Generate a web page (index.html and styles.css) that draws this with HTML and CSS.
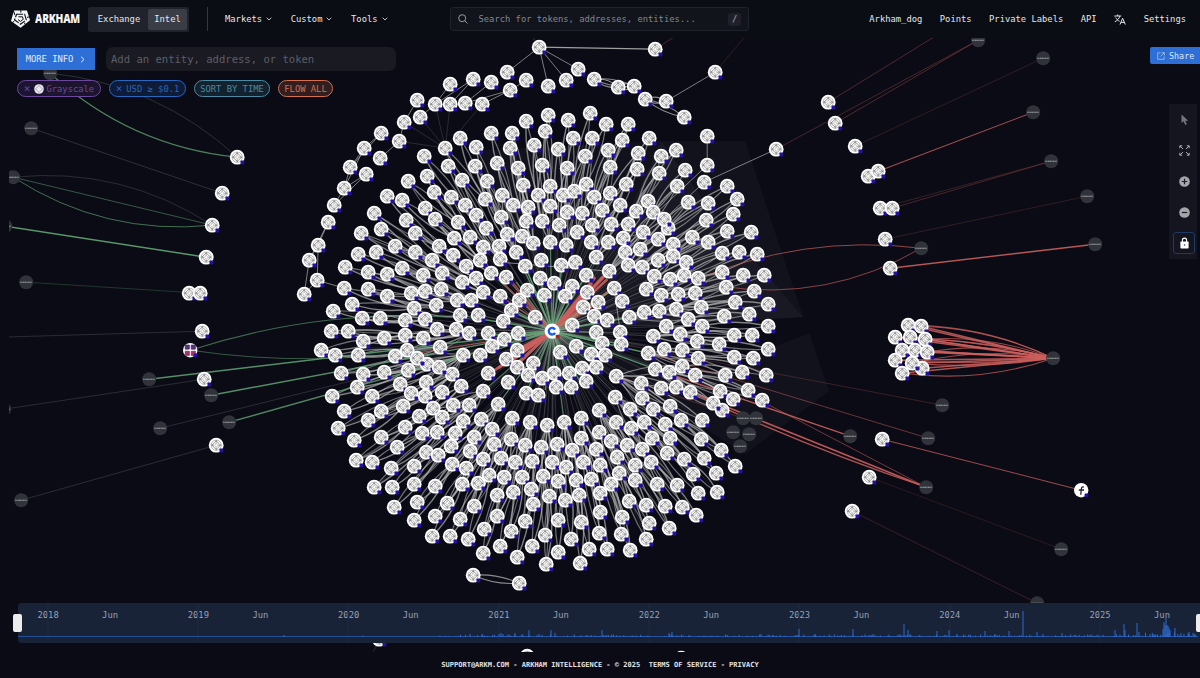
FILE: index.html
```html
<!DOCTYPE html>
<html lang="en">
<head>
  <meta charset="UTF-8" />
  <meta name="viewport" content="width=device-width, initial-scale=1" />
  <title>Arkham Intel - Visualizer</title>
  <link rel="stylesheet" href="styles.css">
</head>
<body>
  <header class="topbar">
    <a class="logo">
      <svg width="21" height="20" viewBox="0 0 21 20" fill="none">
        <path d="M4 1.4H17L20 11.2L10.6 18.8L1 12Z" fill="#f4f5f7" />
        <path d="M6.6 5.2H14.6L16.3 10.8L10.5 15.2L4.6 10.8Z" stroke="#0a0d14" stroke-width="1.1" stroke-dasharray="6.5 1.3" />
        <path d="M8.4 7.8H12.5L13.2 10.4L10.4 12.4L8 10.6" stroke="#0a0d14" stroke-width="1" />
        <path d="M3.2 1L5 6.2M17 8.4L20.6 7.6M14 13.4L16.2 16.6M4.6 11.8L1.6 14.4M10.8 1V3.6" stroke="#0a0d14" stroke-width="1" />
      </svg>
      <span class="wordmark">ARKHAM</span>
    </a>
    <div class="switch">
      <button>Exchange</button>
      <button class="active">Intel</button>
    </div>
    <nav class="menu">
      <a>Markets <svg class="chev" viewBox="0 0 6 4"><path d="M.7.7L3 3L5.3.7" /></svg></a>
      <a>Custom <svg class="chev" viewBox="0 0 6 4"><path d="M.7.7L3 3L5.3.7" /></svg></a>
      <a>Tools <svg class="chev" viewBox="0 0 6 4"><path d="M.7.7L3 3L5.3.7" /></svg></a>
    </nav>
    <div class="search">
      <svg width="10" height="10" viewBox="0 0 10 10" fill="none" stroke="#9a9ca3"><circle cx="4.2" cy="4.2" r="3.5" /><path d="M6.8 6.8L9.5 9.5" /></svg>
      <span>Search for tokens, addresses, entities...</span>
      <kbd>/</kbd>
    </div>
    <nav class="account">
      <a>Arkham_dog</a>
      <a>Points</a>
      <a>Private Labels</a>
      <a>API</a>
      <svg width="12" height="11" viewBox="0 0 12 11" fill="none" stroke="#e6e7ea" stroke-width="1"><path d="M.3 2H7.2M3.7.5V2M5.9 2C5.2 4.6 3.4 6.5.8 7.8M1.8 3.6C2.6 5.2 4 6.6 5.6 7.3M6 10.5L8.6 4.3L11.3 10.5M7 8.4H10.3" /></svg>
      <a>Settings</a>
    </nav>
  </header>

  <main class="visualizer">
    <svg class="graph" id="graph" width="1188" height="614" viewBox="8.8 37.8 1188 614">
      <defs>
        <g id="node">
          <circle r="7.4" fill="#fff" />
          <circle r="5.1" fill="none" stroke="#929297" stroke-width=".65" />
          <path d="M-4.4 0L0-4.2L4.4 0L0 4.2Z" fill="none" stroke="#66666b" stroke-width=".65" />
          <path d="M-5 0H-2M2 0H5M0-5V-2.6M0 2.6V5" fill="none" stroke="#66666b" stroke-width=".65" />
          <path d="M0-2.4L1.5 0L0 2.4L-1.5 0Z" fill="#fff" stroke="#98957c" stroke-width=".5" />
          <rect x="3.3" y="3.3" width="3.9" height="3.9" rx=".8" fill="#24109c" />
        </g>
        <g id="entity">
          <circle r="7" fill="#30333a" />
          <path d="M-6 .1H6" stroke="#a4a6ab" stroke-width="1.1" stroke-dasharray="1.2 .3 .7 .4 1.8 .3" />
        </g>
      </defs>
      <path class="shade" d="M480 150L661 141L707 205L803 317L552 331Z" />
      <path class="shade" d="M661 141H745L803 317L552 331L620 230Z" />
      <path class="shade" d="M552 331L700 375L809 333L829 391L745 454Z" />
      <g id="edges"></g>
      <g id="nodes"></g>
    </svg>

    <div class="filters">
      <div class="row">
        <button class="more">MORE INFO <svg width="5" height="7" viewBox="0 0 5 7"><path d="M1 .7L4 3.5L1 6.3" /></svg></button>
        <div class="entity-input">Add an entity, address, or token</div>
      </div>
      <div class="row chips">
        <span class="chip purple"><i>×</i><svg width="10" height="10" viewBox="0 0 10 10"><circle cx="5" cy="5" r="4.8" fill="#eee9f4" /><path d="M5 1.5L8.5 5L5 8.5L1.5 5Z" fill="none" stroke="#8a8194" stroke-width=".7" /></svg>Grayscale</span>
        <span class="chip blue"><i>×</i>USD ≥ $0.1</span>
        <span class="chip teal">SORT BY TIME</span>
        <span class="chip orange">FLOW ALL</span>
      </div>
    </div>

    <button class="share">
      <svg width="8" height="8" viewBox="0 0 9 9" fill="none" stroke="#b9d0f5" stroke-width=".8"><path d="M4 1H.8V8.2H8V5M5.2.8H8.3V3.8M8 1L4 5" /></svg>
      Share
    </button>

    <aside class="tools">
      <span><svg width="10" height="12" viewBox="0 0 10 12"><path d="M1.5.5V9L3.6 7.2L5.3 11L6.9 10.2L5.3 6.7H8.2Z" fill="#74767c" /></svg></span>
      <span><svg width="11" height="11" viewBox="0 0 11 11" fill="none" stroke="#a9abb0" stroke-width="1"><path d="M.8 3.2V.8H3.2M1 1L4 4M7.8.8H10.2V3.2M10 1L7 4M.8 7.8V10.2H3.2M1 10L4 7M7.8 10.2H10.2V7.8M10 10L7 7" /></svg></span>
      <span><svg width="11" height="11" viewBox="0 0 11 11"><circle cx="5.5" cy="5.5" r="5.3" fill="#a3a5aa" /><path d="M5.5 2.8V8.2M2.8 5.5H8.2" stroke="#191b24" stroke-width="1.2" /></svg></span>
      <span><svg width="11" height="11" viewBox="0 0 11 11"><circle cx="5.5" cy="5.5" r="5.3" fill="#a3a5aa" /><path d="M2.8 5.5H8.2" stroke="#191b24" stroke-width="1.2" /></svg></span>
      <span class="locked"><svg width="9" height="12" viewBox="0 0 9 12"><path d="M2.4 5V3.2A2.1 2.1 0 0 1 6.6 3.2V5" fill="none" stroke="#fff" stroke-width="1.1" /><rect x=".4" y="4.5" width="8.2" height="7" rx=".8" fill="#fff" /><circle cx="4.5" cy="8" r=".8" fill="#333844" /></svg></span>
    </aside>

    <div class="timeline">
      <div class="ticks" id="ticks"></div>
      <svg class="volume" id="volume" width="1182" height="40" viewBox="18 603 1182 40"></svg>
      <i class="handle start"></i>
      <i class="handle end"></i>
    </div>
  </main>

  <footer>
    <span>SUPPORT@ARKM.COM - ARKHAM INTELLIGENCE - © 2025&nbsp; TERMS OF SERVICE - PRIVACY</span>
  </footer>

  <script src="graph.js"></script>
</body>
</html>
```
FILE: styles.css
```css
* {
  box-sizing: border-box;
}
body {
  margin: 0;
  width: 1200px;
  height: 678px;
  overflow: hidden;
  background: #0a0b14;
  color: #e6e7ea;
  font-family: "DejaVu Sans Mono", "Liberation Mono", monospace;
  font-size: 8.8px;
}
button {
  border: none;
  padding: 0;
  background: none;
  color: inherit;
  font: inherit;
}
.topbar {
  position: relative;
  display: flex;
  align-items: center;
  height: 38px;
  padding: 0 14px 0 10px;
  background: #0a0d14;
}
.logo {
  display: flex;
  align-items: center;
  gap: 4px;
  width: 78px;
}
.wordmark {
  width: 53px;
  margin-right: -12px;
  color: #f4f5f7;
  font-family: "Open Sans", "Noto Sans", sans-serif;
  font-size: 12.6px;
  font-weight: 800;
  letter-spacing: -.3px;
  line-height: 18px;
  transform: scaleX(.81);
  transform-origin: left;
}
.switch {
  display: flex;
  width: 101px;
  height: 25px;
  padding: 2px;
  background: #20232b;
  border-radius: 2px;
}
.switch button {
  width: 58px;
}
.switch .active {
  width: 39px;
  background: #3a3d46;
  border-radius: 2px;
}
.menu {
  display: flex;
  align-items: center;
  gap: 18.6px;
  height: 24px;
  margin-left: 18px;
  padding-left: 17px;
  border-left: 1px solid #343741;
}
.menu a {
  display: flex;
  align-items: center;
  gap: 4px;
}
.chev {
  width: 6px;
  height: 4px;
  fill: none;
  stroke: #d5d6da;
  stroke-width: .9;
}
.search {
  display: flex;
  align-items: center;
  width: 299px;
  height: 24px;
  margin-left: 62.5px;
  padding: 0 7px 0 7px;
  border: 1px solid #20222b;
  border-radius: 3px;
  background: #12141c;
  color: #84868d;
}
.search span {
  margin-left: 10.5px;
}
.search kbd {
  margin-left: auto;
  width: 13px;
  height: 13px;
  border-radius: 3px;
  background: #1f212a;
  color: #a6a8ae;
  font: inherit;
  line-height: 13px;
  text-align: center;
}
.account {
  display: flex;
  align-items: center;
  gap: 17.5px;
  margin-left: auto;
}
.visualizer {
  position: relative;
  height: 614px;
}
.graph {
  position: absolute;
  top: 0;
  left: 9px;
}
.shade {
  fill: #fff;
  fill-opacity: .032;
}
.filters {
  position: absolute;
  top: 9px;
  left: 17px;
}
.row {
  display: flex;
  align-items: center;
  gap: 11px;
}
.more {
  display: flex;
  align-items: center;
  justify-content: center;
  gap: 7px;
  width: 78px;
  height: 22px;
  padding-right: 1px;
  background: #2d6fd6;
  color: #e3ecfb;
}
.more svg {
  fill: none;
  stroke: #e3ecfb;
}
.entity-input {
  width: 290px;
  height: 24px;
  padding-left: 5px;
  border-radius: 7px;
  background: #191a22;
  color: #5e5f65;
  font-size: 10.55px;
  line-height: 24px;
}
.chips {
  gap: 8px;
  margin-top: 9px;
}
.chip {
  display: flex;
  align-items: center;
  justify-content: center;
  height: 17px;
  border: 1px solid;
  border-radius: 9px;
}
.chip i {
  margin-right: 4px;
  font-size: 11px;
  font-style: normal;
}
.chip svg {
  margin-right: 2px;
}
.purple {
  width: 84px;
  color: #6c489c;
  background: #1d1530;
}
.blue {
  width: 77px;
  color: #2966bd;
  background: #0e1c38;
}
.teal {
  width: 76px;
  color: #4a8aa3;
  background: #12232f;
}
.orange {
  width: 55px;
  color: #d86f4c;
  background: #321e20;
}
.share {
  position: absolute;
  top: 9px;
  right: 0;
  display: flex;
  align-items: center;
  gap: 4px;
  width: 50px;
  height: 17px;
  padding-left: 7px;
  border-radius: 2px 0 0 2px;
  background: #2d6fd6;
  color: #dbe7fa;
  font-size: 8.4px;
}
.tools {
  position: absolute;
  top: 66px;
  right: 3px;
  display: flex;
  flex-direction: column;
  align-items: center;
  width: 28px;
  background: #14151e;
}
.tools span {
  display: flex;
  align-items: center;
  justify-content: center;
  width: 24px;
  height: 31px;
  padding-left: 3px;
}
.tools .locked {
  width: 22px;
  height: 22px;
  margin: 4px 0 5px 2px;
  padding: 0;
  border: 1px solid #1d3a64;
  border-radius: 3px;
}
.timeline {
  position: absolute;
  left: 18px;
  right: 0;
  bottom: 9px;
  height: 40px;
  border-radius: 3px 0 0 3px;
  background: #182338;
}
.ticks {
  display: grid;
  grid-template-columns: repeat(8, 64.6px 85.7px);
  padding: 7px 0 0 19.5px;
  color: #9aa1ae;
}
.volume {
  position: absolute;
  inset: 0;
}
.volume path {
  fill: none;
  stroke: #2d6bd0;
}
.volume .base {
  stroke: #24509a;
}
.volume .grid {
  stroke: #1d2a41;
}
.handle {
  position: absolute;
  top: 11px;
  width: 9px;
  height: 18px;
  border-radius: 2px;
  background: #ececec;
}
.start {
  left: -5px;
}
.end {
  right: -5px;
}
footer {
  height: 26px;
  color: #e1e2e5;
  font-size: 7.04px;
  font-weight: bold;
  line-height: 26px;
  text-align: center;
}
```
FILE: graph.js
```js
const NS = 'http://www.w3.org/2000/svg';
const hub = [552, 331];
const edgeLayer = document.getElementById('edges');
const nodeLayer = document.getElementById('nodes');

function parse(text) {
  return text.trim().split(/\s+/).map(p => p.split(',').map(Number));
}

// addresses around the hub
const cluster = parse(`
445,148 460,138 476,147 491,133 512,133 526,121 548,115 545,131 510,148 534,145 424,156 448,166 475,166 497,163 518,168 542,165
408,181 427,176 434,192 462,180 487,181 523,185 387,196 402,200 425,208 451,197 465,205 485,199 502,195 513,205 528,207 538,195
374,213 406,220 435,219 458,222 476,215 501,217 526,221 542,221 361,233 381,229 395,246 415,233 439,246 454,238 470,237 486,228
483,247 507,234 499,246 522,236 533,243 358,254 376,252 415,252 432,260 453,255 480,260 500,259 516,252 541,260 345,267 368,272
402,268 387,274 423,275 442,273 466,266 491,273 476,278 506,277 525,266 540,278 462,282 344,288 368,289 387,296 411,293 425,291
441,289 483,292 527,290 500,296 544,295
568,120 590,113 606,124 628,124 573,138 592,138 558,149 622,140 649,138 608,150 585,156 638,153 661,156 676,150 567,168 610,167
637,169 659,173 685,170 677,186 727,186 737,199 708,203 688,202 550,186 563,195 574,191 586,184 594,197 610,193 626,184 550,206
567,212 582,213 602,210 620,205 636,211 648,201 653,212 668,228 664,219 706,220 733,214 592,225 611,224 628,224 559,225 577,232
727,231 751,232 692,237 643,232 623,238 608,242 591,242 566,245 550,242 658,239 673,244 708,242 739,252 722,253 757,254 625,252
640,249 596,257 658,260 673,256 686,262 575,262 561,265 628,265 642,267 609,271 586,275 554,283 654,276 670,279 684,275 698,278
722,272 743,275 764,275 614,288 572,286 646,289 587,292 726,287 754,291 565,296 661,295 678,294 695,293
333,311 352,304 362,318 380,318 414,308 436,305 405,320 425,319 437,329 457,300 471,300 460,315 478,315 519,300 511,310 503,321
535,317 331,331 348,331 363,341 384,338 405,335 423,338 456,329 469,333 488,333 504,339 518,333 321,350 335,355 358,355 395,356
407,350 440,347 463,355 480,355 492,346 517,350 506,359 517,367 533,363 427,364 417,358 452,374 439,367 488,373 341,373 363,374
384,372 408,370 528,375 542,378 332,396 357,387 372,396 400,384 426,382 461,386 508,382 483,391 411,393 425,396 442,392 526,393
538,395 344,411 381,411 403,406 368,420 419,416 433,408 442,417 453,405 469,405 498,404 463,421 481,419 512,418 530,422 547,425
338,428 405,427 492,429 354,440 381,437 422,433 437,432 455,433 474,437 397,447 451,446 494,444 511,439 525,445 541,447 426,452
438,455 470,451 356,460 372,462 391,468 414,466 452,464 466,468 483,459 501,458 515,462 532,461 489,475 504,477 522,477 543,476
374,487 392,487 414,484 435,486 462,484 478,483 497,495 513,492 531,489 533,504 549,496 394,507 417,502 447,503 474,506 414,520
435,516 460,519 497,516 525,521 484,529 511,531 545,535 432,536 450,536 468,539 500,546 532,546 483,553 517,557 546,564
583,307 598,302 572,325 594,316 607,320 622,301 629,317 644,312 659,311 676,309 701,307 735,302 768,304 749,314 724,316 688,319
666,326 702,326 596,332 620,332 653,336 680,334 768,326 734,335 752,335 719,344 697,341 602,343 621,344 576,346 560,352 591,354
605,355 648,353 664,349 682,350 768,349 698,358 734,357 753,358 655,369 669,372 682,366 695,375 725,375 742,372 766,375 582,368
596,367 616,376 554,373 569,373 586,381 556,387 571,387 641,383 661,388 676,387 690,392 720,391 748,390 733,399 722,410 713,403
762,400 615,397 642,398 599,410 630,409 653,409 670,406 581,418 564,422 616,422 644,422 665,424 681,420 702,420 631,428 599,432
581,438 557,444 611,441 652,438 670,438 701,439 572,450 596,449 627,445 642,449 667,453 721,450 552,462 566,467 583,462 600,465
617,457 635,465 651,462 684,459 704,458 735,466 716,473 693,474 558,481 576,480 591,479 611,484 619,473 635,480 657,484 677,485
698,493 717,492 565,500 579,495 600,493 629,501 646,505 665,506 682,507 696,515 600,512 622,517 558,520 581,522 649,523 669,528
599,533 621,534 571,539 646,539 558,552 589,549 607,549 630,550 580,563`);

// addresses outside the main cluster
const outer = parse(`
539,47 507,72 450,84 473,79 491,82 526,80 510,90 417,100 435,104 450,104 465,103 482,104 420,117 404,122 381,133 399,141 364,148
380,158 350,167 366,174 344,188 334,205 328,222 318,245 309,260 317,280 304,294 655,49 715,72 578,69 566,80 548,86 594,79 618,87
634,86 645,99 666,101 684,117 707,136 707,165 704,182 776,149 473,575 519,583 379,639 527,656 681,658
237,157 222,193 212,225 206,257 189,293 200,293 202,331 204,379 216,445
828,102 835,123 855,146 868,176 878,171 880,208 892,208 885,239 890,268 882,439 869,477 852,511
908,325 921,326 895,337 910,337 925,339 902,350 915,350 927,352 895,360 922,368 912,363 902,373`);

const entities = parse(`
50,73 31,128 13,177 5,226 26,282 149,379 211,395 160,428 229,422 4,409 21,500 978,40 1043,58 1033,112 1051,161 1087,196 921,248
1095,244 1053,358 942,405 850,436 928,438 926,487 1061,549 1037,603 743,418 756,418 733,432 749,434 740,446`);

// bend = how far the middle of the line leaves the straight path
function link(a, b, color, width, opacity, bend) {
  const dx = b[0] - a[0], dy = b[1] - a[1];
  const len = Math.hypot(dx, dy) || 1;
  const cx = (a[0] + b[0]) / 2 - dy / len * bend * 2;
  const cy = (a[1] + b[1]) / 2 + dx / len * bend * 2;
  const path = document.createElementNS(NS, 'path');
  path.setAttribute('d', `M${a[0]} ${a[1]}Q${cx.toFixed(1)} ${cy.toFixed(1)} ${b[0]} ${b[1]}`);
  path.setAttribute('fill', 'none');
  path.setAttribute('stroke', color);
  path.setAttribute('stroke-width', width);
  path.setAttribute('stroke-opacity', opacity);
  edgeLayer.appendChild(path);
}

function place(id, p) {
  const use = document.createElementNS(NS, 'use');
  use.setAttribute('href', '#' + id);
  use.setAttribute('x', p[0]);
  use.setAttribute('y', p[1]);
  nodeLayer.appendChild(use);
}

const GRAY = '#b8b8b8', RED = '#cc5f5d', GREEN = '#62a674';

const polar = cluster.map(p => ({
  p,
  r: Math.hypot(p[0] - hub[0], p[1] - hub[1]),
  a: Math.atan2(p[1] - hub[1], p[0] - hub[0])
}));

function turn(a, b) {
  const d = Math.abs(a - b);
  return Math.min(d, 2 * Math.PI - d);
}

polar.forEach((n, i) => {
  if (n.r < 132) {
    link(hub, n.p, '#a9a9ab', .7, .32, 0);
    if (n.r < 95 && i % 3 === 0) link(hub, n.p, GREEN, 1.1, .65, 0);
    return;
  }
  // outer rings hang on the closest address further in
  const inner = polar
    .filter(m => m.r < n.r - 38 && m.r > 78)
    .sort((x, y) => (turn(x.a, n.a) * n.r * 2.2 + Math.abs(n.r - x.r - 66)) - (turn(y.a, n.a) * n.r * 2.2 + Math.abs(n.r - y.r - 66)));
  link(n.p, inner[0].p, GRAY, 1.4, .68, 4);
  link(n.p, inner[0].p, GRAY, 1.2, .6, -3);
  if (i % 4 === 0) link(n.p, inner[1].p, GRAY, 1.1, .5, 3);
  if (i % 2 === 0) link(n.p, hub, '#8d8d90', .6, .25, 3);
});

// flows in and out of the hub
[[493, 371], [498, 368], [504, 361], [508, 357], [512, 352], [507, 364], [515, 366]].forEach(p => link(hub, p, RED, 2.8, .88, 0));
[[609, 271], [603, 276], [607, 279], [612, 289], [595, 277], [587, 292], [598, 302], [592, 283], [583, 307]].forEach(p => link(hub, p, RED, 2.8, .85, 0));
[[506, 277], [510, 279], [516, 292], [480, 260], [500, 296], [405, 355]].forEach(p => link(hub, p, RED, 1.3, .75, 0));
[[525, 266], [516, 282], [540, 278], [554, 283], [562, 265], [572, 286], [505, 308], [490, 335], [614, 288], [630, 317], [621, 344],
  [605, 355], [648, 353], [655, 369], [579, 380], [560, 390], [545, 390], [526, 393]].forEach(p => link(hub, p, GREEN, 1.4, .78, 0));
link([609, 271], [500, 262], GRAY, 1, .7, 0);
link([614, 288], [620, 332], GRAY, 1, .7, 0);

// left side
link([50, 73], [237, 157], GREEN, 1.2, .75, 17);
link([50, 73], [237, 157], GRAY, .7, .3, -17);
link([31, 128], [222, 193], GRAY, .7, .3, 0);
link([13, 177], [212, 225], GREEN, 1, .5, 0);
link([13, 177], [212, 225], GREEN, 1, .65, 18);
link([13, 177], [212, 225], GRAY, .7, .28, -18);
link([5, 226], [206, 257], GREEN, 1.5, .9, 0);
link([26, 282], [200, 293], GREEN, .8, .35, 0);
link([0, 337], [202, 331], GRAY, .7, .28, 0);
link([190, 350], hub, GREEN, 1.1, .6, -24);
link([190, 350], [440, 347], GREEN, 1, .5, 10);
link([149, 379], hub, GREEN, 1.4, .85, 0);
link([211, 395], hub, GREEN, 1.4, .85, 0);
link([229, 422], hub, GREEN, 1.4, .8, 0);
link([160, 428], hub, GRAY, .7, .28, 0);
link([4, 409], [204, 379], GRAY, .7, .28, 0);
link([21, 500], [216, 445], GRAY, .7, .28, 0);

// right side
link([828, 102], [935, 36], RED, .8, .45, 0);
link([835, 123], [978, 40], RED, .8, .45, 0);
link([776, 149], [978, 40], RED, .8, .4, 0);
link([855, 146], [1043, 58], RED, .7, .3, 0);
link([878, 171], [1033, 112], RED, 1.1, .8, 0);
link([880, 208], [1051, 161], RED, .7, .35, 0);
link([892, 208], [1051, 161], RED, .8, .4, 0);
link([885, 239], [1087, 196], RED, .7, .3, 0);
link([690, 282], [921, 248], RED, 1, .7, -16);
link([720, 286], [921, 248], RED, 1, .65, 18);
link([890, 268], [1095, 244], RED, 1.4, .9, 0);
link([882, 439], [1081, 490], RED, 1.1, .75, 0);
link([869, 477], [1061, 549], RED, .6, .3, 0);
link([852, 511], [1037, 603], RED, .7, .35, 0);
link([655, 369], [850, 436], RED, 1.4, .9, 0);
link([690, 392], [926, 487], RED, 1.5, .9, 0);
link([713, 403], [926, 487], RED, 1.3, .85, 3);
link([750, 395], [926, 487], RED, .9, .6, 0);
link([616, 376], [743, 418], RED, .7, .45, 0);
link([621, 344], [942, 405], RED, .7, .35, 0);
link([655, 355], [928, 438], RED, .9, .55, 0);
outer.slice(-12).forEach((p, i) => {
  link(p, [1053, 358], RED, 1.5, .85, 0);
  if (i % 2 === 0) link(p, [1053, 358], RED, 1.2, .75, (p[1] - 350) / 3);
  if (i % 3 === 1) link(p, [1053, 358], RED, 1.1, .7, -7);
});
link([902, 373], [1053, 358], RED, 1.2, .75, 9);

// outer arc, pairs of addresses
const arcs = parse(`
539,47,507,72 539,47,548,86 539,47,566,80 539,47,578,69 450,84,435,104 473,79,450,104 473,79,435,104 491,82,465,103
510,90,465,103 510,90,482,104 526,80,510,90 417,100,404,122 435,104,420,117 404,122,399,141 399,141,380,158 381,133,364,148
381,133,350,167 364,148,350,167 364,148,344,188 366,174,344,188 366,174,334,205 350,167,344,188 344,188,334,205
328,222,318,245 328,222,309,260 318,245,309,260 318,245,317,280 309,260,304,294 317,280,304,294
666,101,715,72 707,136,707,165 704,182,776,149 707,165,659,210 704,182,664,219 317,280,344,288`);
arcs.forEach(e => link([e[0], e[1]], [e[2], e[3]], GRAY, 1, .65, 0));
link([539, 47], [655, 49], GRAY, 1.3, .85, 0);
[[594, 79, 634, 86], [594, 79, 618, 87], [618, 87, 634, 86], [645, 99, 684, 117], [645, 99, 666, 101], [473, 575, 519, 583]].forEach(e => {
  link([e[0], e[1]], [e[2], e[3]], GRAY, 1.1, .75, 3);
  link([e[0], e[1]], [e[2], e[3]], GRAY, 1.1, .75, -3);
});
[[404, 122], [399, 141], [420, 117], [435, 104], [450, 104], [482, 104]].forEach(p => link([445, 148], p, GRAY, .6, .3, 0));
link([539, 47], [532, 36], GRAY, .7, .3, 0);
link([655, 49], [675, 36], RED, .8, .4, 0);
link([715, 72], [745, 36], RED, .7, .3, 0);
link([379, 639], [373, 652], GRAY, .6, .3, 0);

entities.forEach(p => place('entity', p));
outer.forEach(p => place('node', p));
cluster.forEach(p => place('node', p));

nodeLayer.insertAdjacentHTML('beforeend', `
  <circle cx="552" cy="331" r="7.6" fill="#fff" />
  <path d="M554.8 329.4A3.3 3.3 0 1 0 554.8 332.6" fill="none" stroke="#1c5cf0" stroke-width="2.4" />
  <rect x="555.5" y="334.5" width="4" height="3.6" rx="1" fill="#a8251c" />
  <circle cx="190" cy="350" r="7.2" fill="#fff" />
  <path d="M185 344.8H189.2V349H185ZM191 344.8H195.2V349H191Z" fill="#58347c" stroke="#3c2058" stroke-width=".6" />
  <path d="M185 351H189.2V355.2H185ZM191 351H195.2V355.2H191Z" fill="#a3326d" stroke="#6d2050" stroke-width=".6" />
  <rect x="193.4" y="353.4" width="3.8" height="3.6" rx=".8" fill="#24109c" />
  <circle cx="1081" cy="490" r="7.2" fill="#fff" />
  <path d="M1083.6 486.8C1081.4 486.2 1081.3 487.6 1081 490L1080.6 494.5M1078.6 489.8H1083.8" fill="none" stroke="#222" stroke-width="1.3" />
  <rect x="1084.4" y="493.4" width="3.8" height="3.6" rx=".8" fill="#24109c" />`);

// timeline
let ticks = '';
for (let year = 2018; year <= 2025; year++) {
  ticks += `<span>${year}</span><span>Jun</span>`;
}
document.getElementById('ticks').innerHTML = ticks;

const spikes = parse(`
284,2 363,1.5 470,3 482,3 499,3 501,4 503,3 515,4 522,3 529,7 539,3 551,7 555,4 602,7 669,4 672,5 689,2 761,3 773,2 799,8 815,3
853,8 873,3 904,13 908,7 910,3 937,6 949,7 957,3 985,6 995,3 1009,6 1023,26 1037,5 1043,3 1062,4 1115,7 1124,13 1125,7 1137,14
1139,5 1150,3 1154,3 1163,8 1164,15 1165,12 1166,19 1167,12 1168,11 1169,9 1170,7 1175,9 1181,4 1184,3 1189,5 1195,3`);
let bars = '';
spikes.forEach(s => bars += `M${s[0]} 637v${-s[1]}`);
for (let x = 440; x < 1198; x += 1.7) {
  const noise = Math.abs(Math.sin(x * 12.9898) * 43758.5453) % 1;
  const top = x > 1145 ? 4.5 : 2.6;
  bars += `M${x.toFixed(1)} 637v${(-noise * noise * top).toFixed(1)}`;
}
document.getElementById('volume').innerHTML = `
  <path class="grid" d="M48 603V643M198 603V643M348 603V643M499 603V643M649 603V643M799 603V643M950 603V643M1100 603V643" />
  <path class="base" d="M18 636.5H1198" />
  <path d="${bars}" />`;
```
